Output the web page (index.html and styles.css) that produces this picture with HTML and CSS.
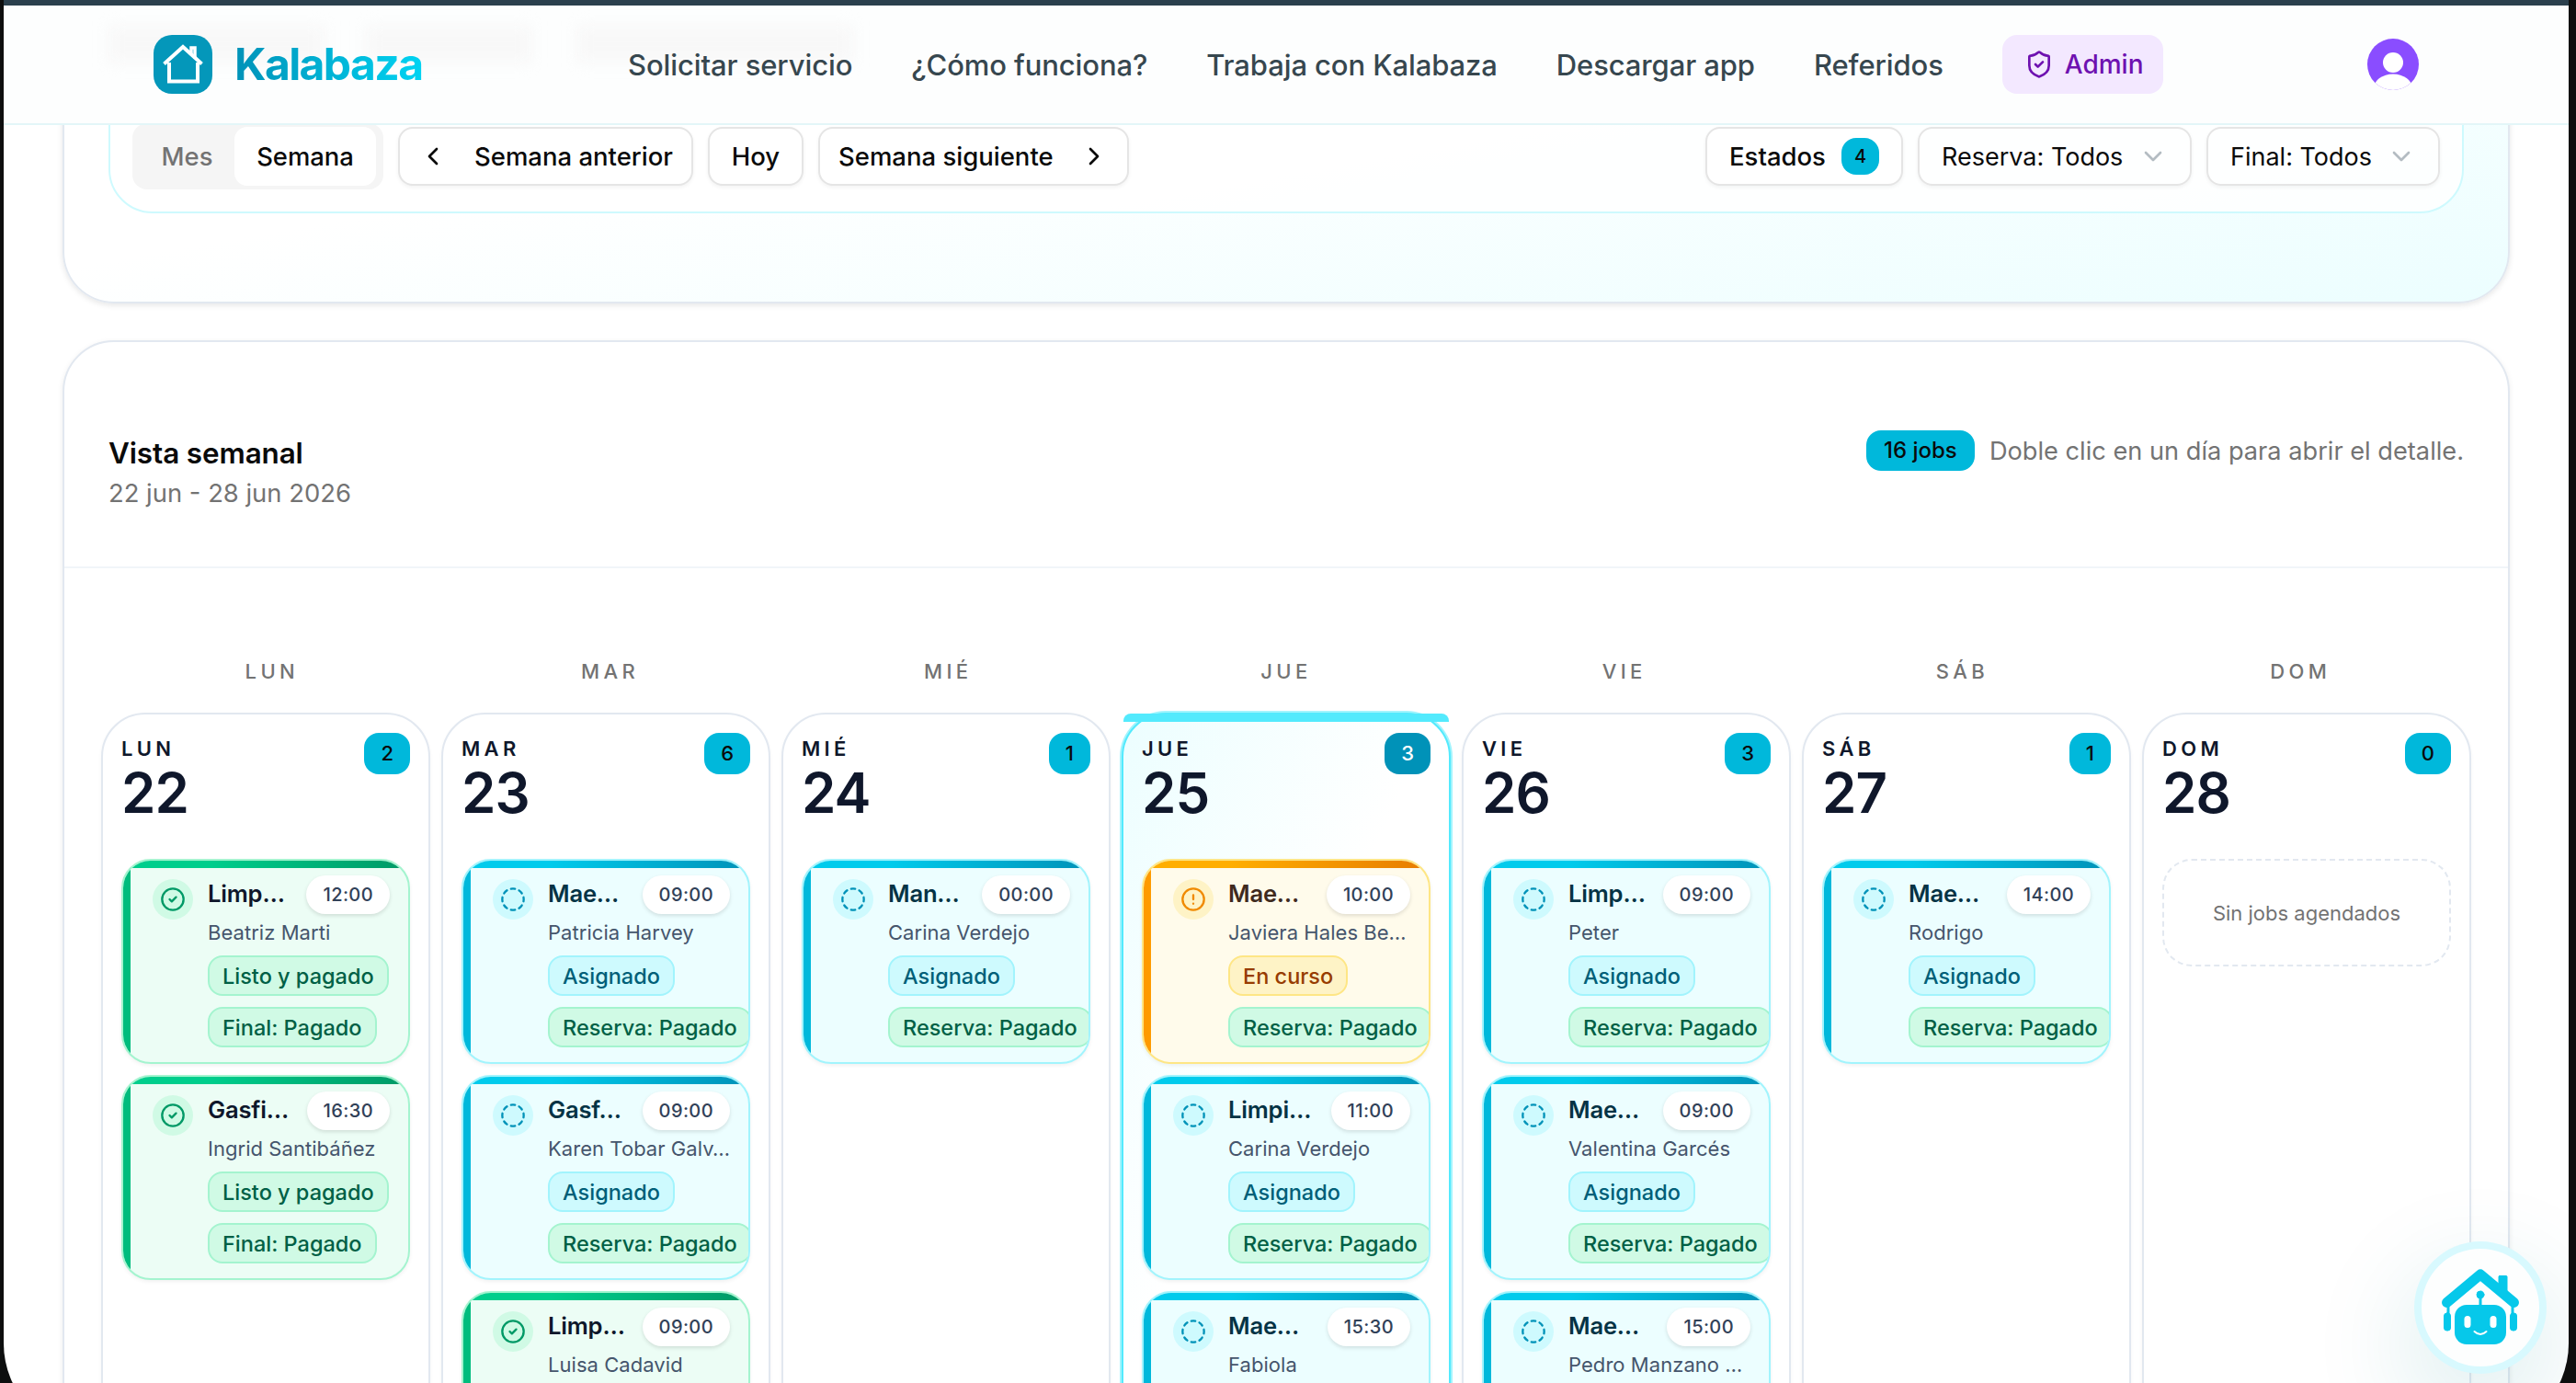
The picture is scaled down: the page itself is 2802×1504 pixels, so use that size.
FILE: index.html
```html
<!DOCTYPE html>
<html lang="es">
<head>
    <meta charset="UTF-8">
    <meta name="viewport" content="width=device-width, initial-scale=1.0">
    <title>Kalabaza - Admin</title>
    <link rel="stylesheet" href="styles.css">
</head>
<body>
    <svg class="sprite" aria-hidden="true">
        <symbol id="icon-check" viewBox="0 0 24 24"><circle cx="12" cy="12" r="10"/><path d="m9 12 2 2 4-4"/></symbol>
        <symbol id="icon-dashed" viewBox="0 0 24 24"><path d="M10.1 2.182a10 10 0 0 1 3.8 0M13.9 21.818a10 10 0 0 1-3.8 0M17.609 3.721a10 10 0 0 1 2.69 2.7M2.182 13.9a10 10 0 0 1 0-3.8M20.279 17.609a10 10 0 0 1-2.7 2.69M21.818 10.1a10 10 0 0 1 0 3.8M3.721 6.391a10 10 0 0 1 2.7-2.69M6.391 20.279a10 10 0 0 1-2.69-2.7"/></symbol>
        <symbol id="icon-alert" viewBox="0 0 24 24"><circle cx="12" cy="12" r="10"/><path d="M12 8v4M12 16h.01"/></symbol>
        <symbol id="icon-left" viewBox="0 0 24 24"><path d="m15 18-6-6 6-6"/></symbol>
        <symbol id="icon-right" viewBox="0 0 24 24"><path d="m9 18 6-6-6-6"/></symbol>
        <symbol id="icon-down" viewBox="0 0 24 24"><path d="m6 9 6 6 6-6"/></symbol>
        <symbol id="icon-shield" viewBox="0 0 24 24"><path d="M20 13c0 5-3.500 7.500-7.660 8.950a1 1 0 0 1-.67-.01C7.500 20.500 4 18 4 13V6a1 1 0 0 1 1-1c2 0 4.500-1.200 6.240-2.720a1.170 1.170 0 0 1 1.520 0C14.510 3.810 17 5 19 5a1 1 0 0 1 1 1z"/><path d="m9 12 2 2 4-4"/></symbol>
    </svg>

    <div class="window">
        <header class="header">
            <div class="brand">
                <svg class="brand-logo" viewBox="0 0 64 64">
                    <rect width="64" height="64" rx="20" fill="#0497ba"/>
                    <path d="M41 21v-7h4v12" fill="none" stroke="#fff" stroke-width="3.500"/>
                    <path d="M11.500 31.500 32 13l20.500 18.500" fill="none" stroke="#fff" stroke-width="4"/>
                    <path d="M17 30v20.500h31V30" fill="none" stroke="#fff" stroke-width="4"/>
                </svg>
                <span class="brand-name">Kalabaza</span>
            </div>
            <nav class="nav">
                <a class="nav-link">Solicitar servicio</a>
                <a class="nav-link">¿Cómo funciona?</a>
                <a class="nav-link">Trabaja con Kalabaza</a>
                <a class="nav-link">Descargar app</a>
                <a class="nav-link">Referidos</a>
                <a class="nav-admin"><svg class="icon"><use href="#icon-shield"/></svg>Admin</a>
            </nav>
            <svg class="avatar" viewBox="0 0 56 56">
                <defs><clipPath id="avatarClip"><circle cx="28" cy="28" r="28"/></clipPath></defs>
                <g clip-path="url(#avatarClip)">
                    <rect width="56" height="56" fill="#8a4dff"/>
                    <circle cx="28" cy="26" r="11" fill="#fff"/>
                    <ellipse cx="28" cy="54" rx="21" ry="15.500" fill="#fff"/>
                </g>
            </svg>
        </header>

        <main class="main">
            <section class="filters-card">
                <div class="toolbar">
                    <div class="tabs">
                        <span class="tab">Mes</span>
                        <span class="tab active">Semana</span>
                    </div>
                    <button class="btn btn-prev"><svg class="icon"><use href="#icon-left"/></svg>Semana anterior</button>
                    <button class="btn btn-today">Hoy</button>
                    <button class="btn btn-next">Semana siguiente<svg class="icon"><use href="#icon-right"/></svg></button>
                    <button class="btn btn-status">Estados<span class="count">4</span></button>
                    <button class="btn select btn-booking">Reserva: Todos<svg class="icon"><use href="#icon-down"/></svg></button>
                    <button class="btn select btn-final">Final: Todos<svg class="icon"><use href="#icon-down"/></svg></button>
                </div>
            </section>

            <section class="week-card">
                <div class="week-header">
                    <div>
                        <h2>Vista semanal</h2>
                        <p class="range">22 jun - 28 jun 2026</p>
                    </div>
                    <div class="week-info">
                        <span class="jobs-total">16 jobs</span>
                        <span class="hint">Doble clic en un día para abrir el detalle.</span>
                    </div>
                </div>

                <div class="weekdays">
                    <span>LUN</span><span>MAR</span><span>MIÉ</span><span>JUE</span><span>VIE</span><span>SÁB</span><span>DOM</span>
                </div>

                <div class="days">
                    <div class="day">
                        <div class="day-head">
                            <div><div class="day-name">LUN</div><div class="day-number">22</div></div>
                            <span class="day-count">2</span>
                        </div>
                        <article class="job done">
                            <span class="job-icon"><svg class="icon"><use href="#icon-check"/></svg></span>
                            <div class="job-body">
                                <div class="job-top"><h3>Limp…</h3><span class="time">12:00</span></div>
                                <p class="client">Beatriz Marti</p>
                                <span class="tag green">Listo y pagado</span>
                                <span class="tag green">Final: Pagado</span>
                            </div>
                        </article>
                        <article class="job done">
                            <span class="job-icon"><svg class="icon"><use href="#icon-check"/></svg></span>
                            <div class="job-body">
                                <div class="job-top"><h3>Gasfi…</h3><span class="time">16:30</span></div>
                                <p class="client">Ingrid Santibáñez</p>
                                <span class="tag green">Listo y pagado</span>
                                <span class="tag green">Final: Pagado</span>
                            </div>
                        </article>
                    </div>

                    <div class="day">
                        <div class="day-head">
                            <div><div class="day-name">MAR</div><div class="day-number">23</div></div>
                            <span class="day-count">6</span>
                        </div>
                        <article class="job assigned">
                            <span class="job-icon"><svg class="icon"><use href="#icon-dashed"/></svg></span>
                            <div class="job-body">
                                <div class="job-top"><h3>Mae…</h3><span class="time">09:00</span></div>
                                <p class="client">Patricia Harvey</p>
                                <span class="tag cyan">Asignado</span>
                                <span class="tag green">Reserva: Pagado</span>
                            </div>
                        </article>
                        <article class="job assigned">
                            <span class="job-icon"><svg class="icon"><use href="#icon-dashed"/></svg></span>
                            <div class="job-body">
                                <div class="job-top"><h3>Gasf…</h3><span class="time">09:00</span></div>
                                <p class="client">Karen Tobar Galv…</p>
                                <span class="tag cyan">Asignado</span>
                                <span class="tag green">Reserva: Pagado</span>
                            </div>
                        </article>
                        <article class="job done">
                            <span class="job-icon"><svg class="icon"><use href="#icon-check"/></svg></span>
                            <div class="job-body">
                                <div class="job-top"><h3>Limp…</h3><span class="time">09:00</span></div>
                                <p class="client">Luisa Cadavid</p>
                            </div>
                        </article>
                    </div>

                    <div class="day">
                        <div class="day-head">
                            <div><div class="day-name">MIÉ</div><div class="day-number">24</div></div>
                            <span class="day-count">1</span>
                        </div>
                        <article class="job assigned">
                            <span class="job-icon"><svg class="icon"><use href="#icon-dashed"/></svg></span>
                            <div class="job-body">
                                <div class="job-top"><h3>Man…</h3><span class="time">00:00</span></div>
                                <p class="client">Carina Verdejo</p>
                                <span class="tag cyan">Asignado</span>
                                <span class="tag green">Reserva: Pagado</span>
                            </div>
                        </article>
                    </div>

                    <div class="day today">
                        <div class="day-head">
                            <div><div class="day-name">JUE</div><div class="day-number">25</div></div>
                            <span class="day-count">3</span>
                        </div>
                        <article class="job progress">
                            <span class="job-icon"><svg class="icon"><use href="#icon-alert"/></svg></span>
                            <div class="job-body">
                                <div class="job-top"><h3>Mae…</h3><span class="time">10:00</span></div>
                                <p class="client">Javiera Hales Be…</p>
                                <span class="tag amber">En curso</span>
                                <span class="tag green">Reserva: Pagado</span>
                            </div>
                        </article>
                        <article class="job assigned">
                            <span class="job-icon"><svg class="icon"><use href="#icon-dashed"/></svg></span>
                            <div class="job-body">
                                <div class="job-top"><h3>Limpi…</h3><span class="time">11:00</span></div>
                                <p class="client">Carina Verdejo</p>
                                <span class="tag cyan">Asignado</span>
                                <span class="tag green">Reserva: Pagado</span>
                            </div>
                        </article>
                        <article class="job assigned">
                            <span class="job-icon"><svg class="icon"><use href="#icon-dashed"/></svg></span>
                            <div class="job-body">
                                <div class="job-top"><h3>Mae…</h3><span class="time">15:30</span></div>
                                <p class="client">Fabiola</p>
                            </div>
                        </article>
                    </div>

                    <div class="day">
                        <div class="day-head">
                            <div><div class="day-name">VIE</div><div class="day-number">26</div></div>
                            <span class="day-count">3</span>
                        </div>
                        <article class="job assigned">
                            <span class="job-icon"><svg class="icon"><use href="#icon-dashed"/></svg></span>
                            <div class="job-body">
                                <div class="job-top"><h3>Limp…</h3><span class="time">09:00</span></div>
                                <p class="client">Peter</p>
                                <span class="tag cyan">Asignado</span>
                                <span class="tag green">Reserva: Pagado</span>
                            </div>
                        </article>
                        <article class="job assigned">
                            <span class="job-icon"><svg class="icon"><use href="#icon-dashed"/></svg></span>
                            <div class="job-body">
                                <div class="job-top"><h3>Mae…</h3><span class="time">09:00</span></div>
                                <p class="client">Valentina Garcés</p>
                                <span class="tag cyan">Asignado</span>
                                <span class="tag green">Reserva: Pagado</span>
                            </div>
                        </article>
                        <article class="job assigned">
                            <span class="job-icon"><svg class="icon"><use href="#icon-dashed"/></svg></span>
                            <div class="job-body">
                                <div class="job-top"><h3>Mae…</h3><span class="time">15:00</span></div>
                                <p class="client">Pedro Manzano …</p>
                            </div>
                        </article>
                    </div>

                    <div class="day">
                        <div class="day-head">
                            <div><div class="day-name">SÁB</div><div class="day-number">27</div></div>
                            <span class="day-count">1</span>
                        </div>
                        <article class="job assigned">
                            <span class="job-icon"><svg class="icon"><use href="#icon-dashed"/></svg></span>
                            <div class="job-body">
                                <div class="job-top"><h3>Mae…</h3><span class="time">14:00</span></div>
                                <p class="client">Rodrigo</p>
                                <span class="tag cyan">Asignado</span>
                                <span class="tag green">Reserva: Pagado</span>
                            </div>
                        </article>
                    </div>

                    <div class="day">
                        <div class="day-head">
                            <div><div class="day-name">DOM</div><div class="day-number">28</div></div>
                            <span class="day-count">0</span>
                        </div>
                        <div class="empty">Sin jobs agendados</div>
                    </div>
                </div>
            </section>
        </main>

        <div class="assistant">
            <svg viewBox="0 0 128 128">
                <g fill="#06c8ea" stroke="#06c8ea" stroke-linejoin="round" stroke-linecap="round">
                    <path d="M27.500 58.500 64 28l36.500 30.500" fill="none" stroke-width="11"/>
                    <rect x="84" y="29.500" width="9" height="20" rx="1" stroke-width="1"/>
                    <circle cx="64" cy="50" r="4" stroke-width="1"/>
                    <path d="M64 52v10M29 60v12M99 60v12" fill="none" stroke-width="3"/>
                    <rect x="36" y="61" width="56" height="43" rx="13" stroke-width="0"/>
                    <rect x="24.500" y="70" width="7" height="19" rx="3" stroke-width="1"/>
                    <rect x="96.500" y="70" width="7" height="19" rx="3" stroke-width="1"/>
                </g>
                <rect x="46.500" y="73" width="7" height="13" rx="3.500" fill="#fff"/>
                <rect x="74.500" y="73" width="7" height="13" rx="3.500" fill="#fff"/>
                <path d="M57.500 90q6.500 6 13 0" fill="none" stroke="#fff" stroke-width="2" stroke-linecap="round"/>
            </svg>
        </div>
    </div>
</body>
</html>
```

FILE: styles.css
```css
* {
    box-sizing: border-box;
}
body {
    margin: 0;
    height: 1504px;
    overflow: hidden;
    background-color: #0d0e0e;
    font-family: Inter, "Liberation Sans", sans-serif;
    color: #0a0a0a;
}
h2, h3, p {
    margin: 0;
}
.sprite {
    position: absolute;
    width: 0;
    height: 0;
}
.icon {
    width: 32px;
    height: 32px;
    fill: none;
    stroke: currentColor;
    stroke-width: 2;
    stroke-linecap: round;
    stroke-linejoin: round;
    flex-shrink: 0;
}
.window {
    position: relative;
    width: 2790px;
    height: 1560px;
    margin-left: 4px;
    border-top: 6px solid #2b404d;
    border-radius: 0 0 99px 99px;
    background-color: #fff;
    overflow: hidden;
}

/* Header */
.header {
    position: relative;
    z-index: 2;
    display: flex;
    align-items: center;
    height: 130px;
    padding: 0 163px;
    border-bottom: 2px solid #e3f6f8;
    background-color: #fdfefe;
}
.header::before {
    content: "";
    position: absolute;
    left: 114px;
    top: 22px;
    width: 810px;
    height: 40px;
    background-image: linear-gradient(to right, #f8f8f8 235px, transparent 235px, transparent 280px, #f8f8f8 280px, #f8f8f8 460px, transparent 460px, transparent 510px, #f8f8f8 510px);
    filter: blur(8px);
}
.brand {
    position: relative;
    display: flex;
    align-items: center;
    gap: 24px;
    width: 516px;
}
.brand-logo {
    width: 64px;
    height: 64px;
}
.brand-name {
    font-size: 48px;
    font-weight: 700;
    line-height: 64px;
    letter-spacing: -1.600px;
    color: transparent;
    background-image: linear-gradient(to right, #0092b8, #00d3f2);
    -webkit-background-clip: text;
    background-clip: text;
}
.nav {
    position: relative;
    display: flex;
    align-items: center;
    gap: 64px;
}
.nav-link, .nav-admin {
    font-size: 31px;
    font-weight: 500;
    letter-spacing: -0.100px;
    color: #37474f;
    white-space: nowrap;
}
.nav-admin {
    display: flex;
    align-items: center;
    gap: 12px;
    width: 175px;
    height: 64px;
    padding-left: 24px;
    border-radius: 16px;
    background-color: #f3e8ff;
    color: #6e11b0;
    font-size: 28px;
    letter-spacing: 0;
}
.avatar {
    width: 56px;
    height: 56px;
    margin-left: auto;
}

/* Filters */
.main {
    padding: 0 64px;
    margin-top: -60px;
}
.filters-card {
    height: 254px;
    padding: 0 48px;
    border: 2px solid #e2e8f0;
    border-top: none;
    border-radius: 0 0 56px 56px;
    background-image: linear-gradient(170deg, #fff 30%, #ecfeff);
    box-shadow: 0 2px 6px rgba(0, 0, 0, 0.1);
}
.toolbar {
    display: flex;
    align-items: flex-end;
    gap: 16px;
    height: 156px;
    padding: 0 24px 24px;
    border: 2px solid #cefafe;
    border-radius: 48px;
    background-color: rgba(255, 255, 255, 0.85);
}
.tabs {
    display: flex;
    width: 273px;
    height: 72px;
    padding: 4px 8px 4px 4px;
    border-radius: 16px;
    background-color: #f5f5f5;
}
.tab {
    display: flex;
    align-items: center;
    justify-content: center;
    width: 107px;
    padding-left: 4px;
    border-radius: 14px;
    font-size: 27.400px;
    font-weight: 500;
    color: #737373;
}
.tab.active {
    width: 154px;
    padding-left: 0;
    background-color: #fff;
    color: #0a0a0a;
}
.btn {
    display: flex;
    align-items: center;
    justify-content: space-between;
    height: 64px;
    margin-bottom: 4px;
    padding: 0 20px;
    border: 2px solid #e5e5e5;
    border-radius: 16px;
    background-color: #fff;
    box-shadow: 0 2px 4px rgba(0, 0, 0, 0.05);
    font-family: inherit;
    font-size: 27.500px;
    font-weight: 500;
    color: #0a0a0a;
    white-space: nowrap;
}
.btn-prev {
    width: 321px;
}
.btn-today {
    width: 104px;
    justify-content: center;
}
.btn-next {
    width: 338px;
}
.btn-status {
    width: 215px;
    margin-left: auto;
    padding: 0 24px;
}
.btn-booking {
    width: 298px;
}
.btn-final {
    width: 254px;
}
.select {
    padding: 0 24px;
    font-size: 27px;
    font-weight: 400;
    background-color: transparent;
}
.select .icon {
    color: #b4bcc2;
}
.count {
    width: 41px;
    height: 40px;
    border-radius: 16px;
    background-color: #00b8db;
    font-size: 20px;
    line-height: 40px;
    text-align: center;
}

/* Week view */
.week-card {
    height: 1300px;
    margin-top: 40px;
    border: 2px solid #e2e8f0;
    border-radius: 56px;
    background-color: #fff;
    box-shadow: 0 2px 6px rgba(0, 0, 0, 0.08);
}
.week-header {
    display: flex;
    justify-content: space-between;
    height: 246px;
    padding: 96px 48px 0;
    border-bottom: 2px solid #f1f5f9;
}
.week-header h2 {
    padding-top: 1px;
    font-size: 31.400px;
    font-weight: 600;
    line-height: 48px;
    letter-spacing: -0.100px;
}
.range {
    font-size: 27.400px;
    line-height: 39px;
    color: #737373;
}
.week-info {
    display: flex;
    align-items: center;
    gap: 16px;
    height: 44px;
}
.jobs-total {
    width: 118px;
    height: 44px;
    border-radius: 16px;
    background-color: #00b8db;
    font-size: 24px;
    font-weight: 500;
    line-height: 44px;
    text-align: center;
}
.hint {
    font-size: 27.200px;
    color: #737373;
}
.weekdays {
    display: grid;
    grid-template-columns: repeat(7, 1fr);
    gap: 12px;
    padding: 96px 48px 0;
    font-size: 22px;
    font-weight: 500;
    line-height: 32px;
    letter-spacing: 4.400px;
    text-align: center;
    color: #737373;
}
.days {
    display: grid;
    grid-template-columns: repeat(7, 1fr);
    gap: 12px;
    height: 800px;
    margin-top: 29px;
    padding: 0 40px;
}
.day {
    display: flex;
    flex-direction: column;
    gap: 12px;
    min-width: 0;
    padding: 20px;
    border: 2px solid #e2e8f0;
    border-radius: 48px;
    background-color: #fff;
    box-shadow: 0 2px 4px rgba(0, 0, 0, 0.04);
}
.day.today {
    position: relative;
    border-color: #53eafd;
    background-image: linear-gradient(115deg, #ecfeff, #fff 45%);
    box-shadow: 0 0 0 2px #a2f4fd;
}
.today::before {
    content: "";
    position: absolute;
    top: -1px;
    left: 0;
    right: 0;
    height: 9px;
    border-radius: 8px 8px 0 0;
    background-color: #53eafd;
}
.day-head {
    display: flex;
    justify-content: space-between;
    height: 125px;
}
.day-name {
    margin-top: 1px;
    font-size: 22px;
    font-weight: 600;
    line-height: 32px;
    letter-spacing: 4.300px;
    color: #0f172b;
}
.day-number {
    margin-top: 2px;
    font-size: 60px;
    font-weight: 600;
    line-height: 60px;
    letter-spacing: -1px;
    color: #0f172b;
}
.day-count {
    height: 45px;
    padding: 0 18px;
    border-radius: 16px;
    background-color: #00b8db;
    font-size: 22px;
    font-weight: 500;
    line-height: 45px;
}
.today .day-count {
    background-color: #0092b8;
    color: #fff;
}

/* Jobs */
.job {
    position: relative;
    display: flex;
    gap: 16px;
    height: 223px;
    flex-shrink: 0;
    padding: 16px 20px 0 32px;
    border: 2px solid;
    border-radius: 32px;
    overflow: hidden;
    box-shadow: 0 2px 4px rgba(0, 0, 0, 0.06);
}
.job::before {
    content: "";
    position: absolute;
    inset: 0 auto 0 0;
    width: 8px;
    background-color: var(--bar);
}
.job::after {
    content: "";
    position: absolute;
    inset: 0 0 auto 0;
    height: 8px;
    background-image: linear-gradient(to right, var(--from) 30%, var(--to));
}
.job.done {
    --bar: #00bc7d;
    --from: #00ce8c;
    --to: #009966;
    border-color: #a4f4cf;
    background-color: #ecfdf5;
}
.job.assigned {
    --bar: #00b8db;
    --from: #00cbec;
    --to: #0092b8;
    border-color: #a2f4fd;
    background-color: #ecfeff;
}
.job.progress {
    --bar: #fe9a00;
    --from: #ffae00;
    --to: #e77c00;
    border-color: #fee685;
    background-color: #fffbeb;
}
.job-icon {
    display: flex;
    align-items: center;
    justify-content: center;
    width: 44px;
    height: 44px;
    margin-top: 4px;
    border-radius: 50%;
    flex-shrink: 0;
}
.job-icon .icon {
    width: 28px;
    height: 28px;
}
.done .job-icon {
    background-color: #d0fae5;
    color: #009966;
}
.assigned .job-icon {
    background-color: #cefafe;
    color: #0092b8;
}
.progress .job-icon {
    background-color: #fef3c6;
    color: #f08a00;
}
.job-body {
    display: flex;
    flex-direction: column;
    align-items: flex-start;
    flex: 1;
    min-width: 0;
}
.job-top {
    display: flex;
    align-items: center;
    justify-content: space-between;
    width: 100%;
    height: 42px;
}
.job h3 {
    font-size: 25.600px;
    font-weight: 600;
    line-height: 38px;
    letter-spacing: -0.200px;
    padding-bottom: 2px;
    color: #0f172b;
}
.job.assigned h3 {
    color: #053345;
}
.job.progress h3 {
    color: #3f2a1e;
}
.time {
    height: 42px;
    padding: 0 18px;
    border-radius: 21px;
    background-color: #fff;
    box-shadow: 0 2px 4px rgba(0, 0, 0, 0.12);
    font-size: 20px;
    font-weight: 500;
    line-height: 42px;
    letter-spacing: 0.400px;
    color: #314158;
}
.client {
    margin: 4px 0 9px;
    font-size: 22px;
    line-height: 32px;
    letter-spacing: 0.050px;
    white-space: nowrap;
    color: #45556c;
}
.tag {
    height: 44px;
    margin-bottom: 12px;
    padding: 1px 14px 0;
    border: 2px solid;
    border-radius: 16px;
    font-size: 23.500px;
    font-weight: 500;
    line-height: 40px;
    white-space: nowrap;
}
.tag.green {
    border-color: #a4f4cf;
    background-color: #d0fae5;
    color: #006045;
}
.tag.cyan {
    border-color: #a2f4fd;
    background-color: #cefafe;
    color: #005f78;
}
.tag.amber {
    border-color: #fee685;
    background-color: #fef3c6;
    color: #973c00;
}
.empty {
    display: flex;
    align-items: center;
    justify-content: center;
    height: 117px;
    border: 2px dashed #e2e8f0;
    border-radius: 32px;
    font-size: 22px;
    color: #737373;
}

/* Floating assistant */
.assistant {
    position: absolute;
    z-index: 3;
    left: 2622px;
    top: 1344px;
    width: 144px;
    height: 144px;
    padding: 8px;
    border-radius: 50%;
    background-color: #d8f9fe;
    box-shadow: 0 40px 100px 20px rgba(0, 130, 140, 0.1);
}
.assistant svg {
    display: block;
    width: 128px;
    height: 128px;
    border-radius: 50%;
    background-color: #fdfefe;
}
```
